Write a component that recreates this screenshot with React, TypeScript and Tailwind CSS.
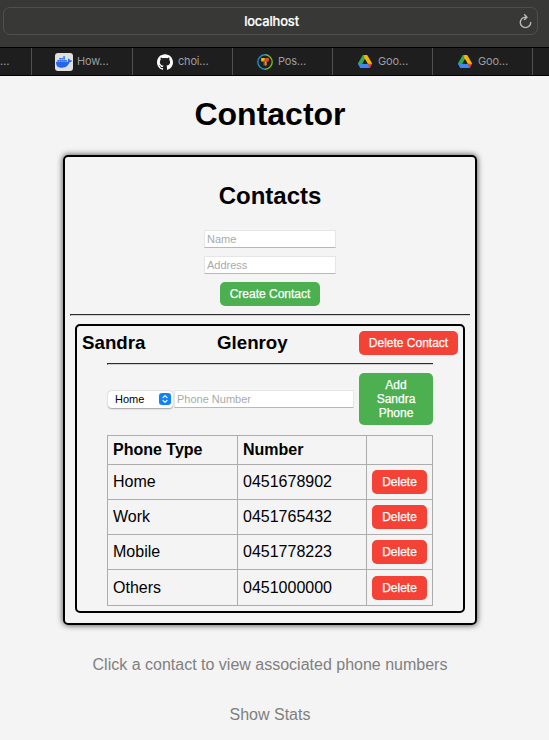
import type { ReactNode } from "react";
import { SiDocker, SiGithub } from "react-icons/si";

const phones = [
  { type: "Home", number: "0451678902", height: "h-[35px]" },
  { type: "Work", number: "0451765432", height: "h-[35px]" },
  { type: "Mobile", number: "0451778223", height: "h-[35px]" },
  { type: "Others", number: "0451000000", height: "h-[36px]" },
];

function DriveIcon() {
  return (
    <svg width="14" height="13" viewBox="0 0 14 13">
      <path fill="#34a853" d="M4.800 0H7L8 2.500 4 9.200H0V8.200z" />
      <path fill="#fbb004" d="M6.200 0H9.200L14 8.300V9.200H10L6 2.500z" />
      <path fill="#4285f4" d="M4 8.800h6L12 13H2.200L0 9z" />
      <path fill="#ea4335" d="M9.800 8.800H14L12 13z" />
      <path fill="#1e1e1e" d="M7 4.400 9.500 8.800h-5z" />
    </svg>
  );
}

function ForumIcon() {
  return (
    <svg width="16" height="16" viewBox="0 0 16 16" fill="none">
      <path d="M8 .8A7.200 7.200 0 0 0 8 15.200" stroke="#1d8fc9" strokeWidth="1.4" />
      <path d="M8 .8A7.200 7.200 0 0 1 8 15.200" stroke="#74b72b" strokeWidth="1.4" />
      <path d="M4.200 4h3.600v3.500H4.200z" fill="#f5b81c" />
      <path d="M6.500 6.500H8V11.500H6.500z" fill="#9c5a1c" />
      <path d="M8 6.500h1.700V11.500H8z" fill="#f08a22" />
      <path d="M8.200 4h3.600v3.500H8.200z" fill="#e24b2b" />
    </svg>
  );
}

function Tab({ icon, label, gap }: { icon: ReactNode; label: string; gap: string }) {
  return (
    <div className={`flex items-center border-l border-[#505050] ${gap}`}>
      {icon}
      <span>{label}</span>
    </div>
  );
}

function Browser() {
  return (
    <header className="font-['Inter',sans-serif]">
      <div className="h-[47px] bg-[#383836] pt-[7px] pl-[3px]">
        <div className="relative flex h-7 w-[535px] items-center justify-center rounded-[7px] border border-[#4f4f4d] text-[13px] font-medium text-white">
          <span className="pt-px pl-0.5 tracking-[-0.2px] [-webkit-text-stroke:0.2px_white]">localhost</span>
          <svg className="absolute top-[6px] right-[5px]" width="13" height="15" viewBox="0 0 13 15" fill="none" stroke="#b9b9b8" strokeWidth="1.4" strokeLinecap="round" strokeLinejoin="round">
            <path d="M7.500 3.200H6.500A5.200 5.200 0 1 0 11.700 8.400" />
            <path d="M5.600 .8 8 3.200 5.600 5.600" />
          </svg>
        </div>
      </div>
      <div className="grid h-[29px] grid-cols-[31px_101px_100px_100px_100px_100px_17px] overflow-hidden border-y border-black bg-[#1e1e1e] text-[11px] tracking-[-0.2px] text-[#9d9d9d]">
        <div className="flex items-center">
          <span className="-ml-px pl-px tracking-[-1px]">…</span>
        </div>
        <Tab
          gap="pl-[23px] gap-1"
          label="How…"
          icon={
            <span className="flex size-[18px] items-center justify-center rounded-[3px] bg-[#e0e0e0]">
              <SiDocker size={16} color="#2467ed" />
            </span>
          }
        />
        <Tab gap="pl-6 gap-[5px]" label="choi…" icon={<SiGithub size={16} color="#ffffff" />} />
        <Tab gap="pl-6 gap-[5px]" label="Pos…" icon={<ForumIcon />} />
        <Tab gap="pl-[25px] gap-1.5" label="Goo…" icon={<DriveIcon />} />
        <Tab gap="pl-[25px] gap-1.5" label="Goo…" icon={<DriveIcon />} />
        <div className="border-l border-[#505050]" />
      </div>
    </header>
  );
}

const field =
  "block h-[18px] border border-[#e6e6e6] border-b-[#b8b8b8] bg-white px-0.5 text-[11px] leading-4 outline-none placeholder:text-[#a9a9a9]";
const button =
  "rounded-[5px] text-center text-[12px] leading-[14px] text-white [-webkit-text-stroke:0.25px_white]";
const rule = "h-0.5 border-t border-b border-l border-t-[#2c2c2c] border-b-[#d2d2d2] border-l-[#2c2c2c]";

function PhoneTable() {
  return (
    <table className="mt-[10px] w-[326px] table-fixed border-collapse text-left text-[16px] leading-[18px]">
      <colgroup>
        <col className="w-[130px]" />
        <col className="w-[129px]" />
        <col className="w-[66px]" />
      </colgroup>
      <thead>
        <tr className="h-[29px]">
          <th className="border border-[#adadad] px-[5px] py-0">Phone Type</th>
          <th className="border border-[#adadad] px-[5px] py-0">Number</th>
          <th className="border border-[#adadad] p-0" />
        </tr>
      </thead>
      <tbody>
        {phones.map((p) => (
          <tr key={p.type} className={p.height}>
            <td className="border border-[#adadad] px-[5px] py-0">{p.type}</td>
            <td className="border border-[#adadad] px-[5px] py-0">{p.number}</td>
            <td className="border border-[#adadad] px-[5px] py-0">
              <button className={`${button} block h-6 w-[55px] bg-[#f44336]`}>Delete</button>
            </td>
          </tr>
        ))}
      </tbody>
    </table>
  );
}

function Contact() {
  return (
    <section className="mx-auto mt-2 h-[289px] w-[390px] rounded-[5px] border-2 border-black pt-[5px] pl-[5px]">
      <div className="flex h-6 items-center text-[18.72px] font-bold">
        <h3 className="w-[135px]">Sandra</h3>
        <h3 className="w-[142px]">Glenroy</h3>
        <button className={`${button} h-6 w-[99px] bg-[#f44336] font-normal`}>Delete Contact</button>
      </div>
      <div className="ml-[25px] w-[326px]">
        <div className={`${rule} mt-2`} />
        <div className="mt-2 flex h-[52px] items-center">
          <div className="ml-px flex h-[17px] w-[65px] items-center justify-between rounded-[4px] bg-white pr-0.5 pl-[7px] text-[11px] shadow-[0_0.5px_1.500px_rgba(0,0,0,0.35)]">
            <span>Home</span>
            <span className="flex h-3 w-3 items-center justify-center rounded-[3px] bg-[#1180fb]">
              <svg width="8" height="10" viewBox="0 0 8 10" fill="none" stroke="white" strokeWidth="1.2" strokeLinecap="round" strokeLinejoin="round">
                <path d="m2 3.700 2-2 2 2M2 6.300l2 2 2-2" />
              </svg>
            </span>
          </div>
          <input className={`${field} ml-px w-[180px]`} placeholder="Phone Number" />
          <button className={`${button} ml-[5px] h-[52px] w-[74px] shrink-0 bg-[#4caf50] px-3`}>Add Sandra Phone</button>
        </div>
        <PhoneTable />
      </div>
    </section>
  );
}

export default function App() {
  return (
    <div className="h-[740px] w-[549px] overflow-hidden bg-[#f4f4f4] font-['Liberation_Sans',Arial,sans-serif] text-black">
      <Browser />
      <main className="w-[540px]">
        <h1 className="pt-[20px] text-center text-[32px] leading-[37px] font-bold">Contactor</h1>
        <div className="mx-auto mt-[22px] h-[470px] w-[414px] rounded-[5px] border-2 border-black shadow-[0_0_6px_rgba(0,0,0,0.75)]">
          <h2 className="pt-[25px] text-center text-[24px] leading-7 font-bold">Contacts</h2>
          <div className="mt-5 flex flex-col items-center gap-2">
            <input className={`${field} w-[132px]`} placeholder="Name" />
            <input className={`${field} w-[132px]`} placeholder="Address" />
            <button className={`${button} h-6 w-[100px] bg-[#4caf50]`}>Create Contact</button>
          </div>
          <div className={`${rule} mx-auto mt-2 w-[400px]`} />
          <Contact />
        </div>
        <p className="mt-[31px] text-center text-[16px] leading-[18px] text-[#808080]">
          Click a contact to view associated phone numbers
        </p>
        <p className="mt-8 text-center text-[16px] leading-[18px] text-[#808080]">Show Stats</p>
      </main>
    </div>
  );
}
